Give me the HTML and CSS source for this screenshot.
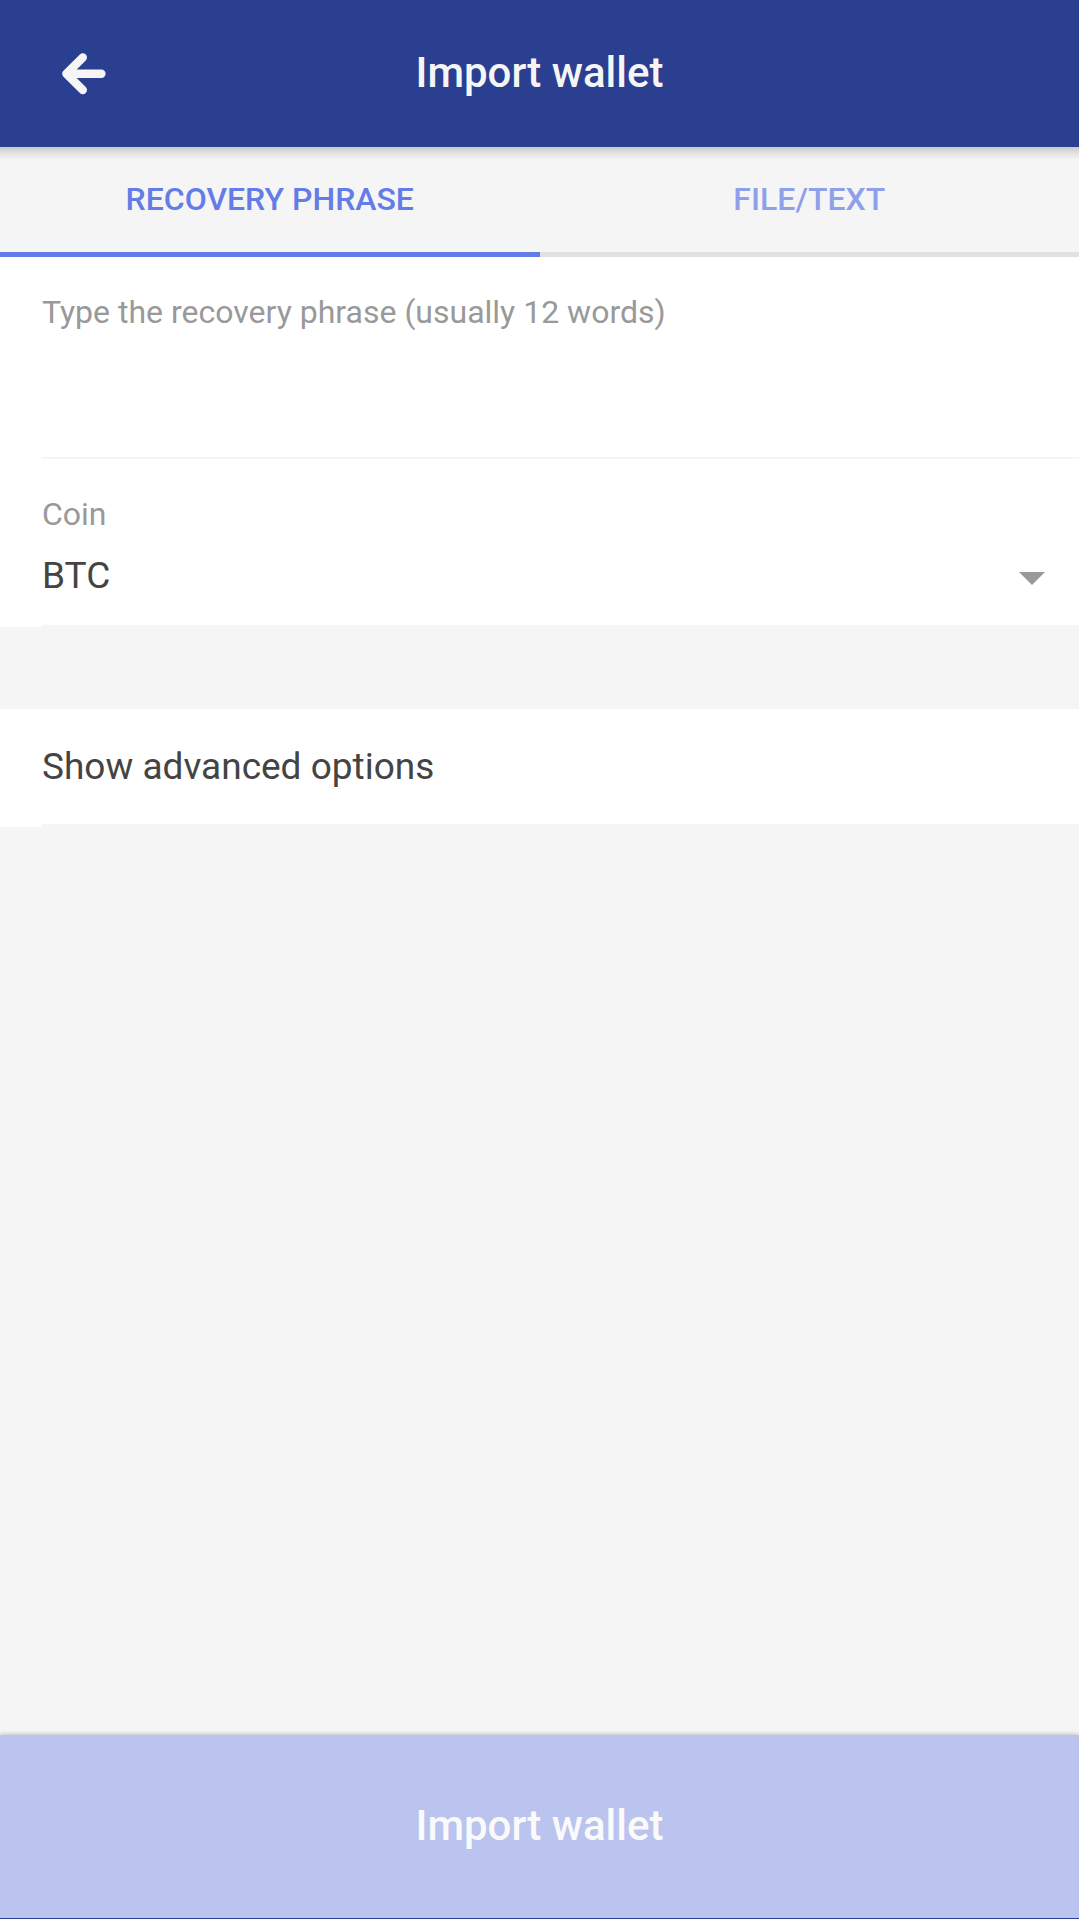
FILE: index.html
```html
<!DOCTYPE html>
<html lang="en">
<head>
<meta charset="utf-8">
<meta name="viewport" content="width=device-width, initial-scale=1">
<title>Import wallet</title>
<link rel="stylesheet" href="styles.css">
</head>
<body>
<header class="toolbar">
  <button class="back" type="button" aria-label="Back">
    <svg viewBox="0 0 46 42" width="46" height="42" fill="none" stroke="currentColor" stroke-width="8.4" stroke-linecap="round" stroke-linejoin="round"><path d="M21.8 4.4 L5.4 20.7 L21.8 37 M6 20.7 H40.4"/></svg>
  </button>
  <h1 class="title">Import wallet</h1>
</header>
<nav class="tabs" role="tablist">
  <button class="tab tab-active" type="button" role="tab" aria-selected="true">RECOVERY PHRASE</button>
  <button class="tab" type="button" role="tab" aria-selected="false">FILE/TEXT</button>
</nav>
<main class="content">
  <div class="row">
    <div class="field phrase">
      <label class="label" for="phrase">Type the recovery phrase (usually 12 words)</label>
      <textarea class="phrase-input" id="phrase"></textarea>
    </div>
  </div>
  <div class="row">
    <div class="field coin">
      <label class="label" for="coin">Coin</label>
      <div class="select-line">
        <select class="select" id="coin"><option>BTC</option></select>
        <svg class="caret" viewBox="0 0 26 20" width="26" height="20"><path d="M0 7H26L13 20Z" fill="currentColor"/></svg>
      </div>
    </div>
  </div>
  <div class="row advanced">
    <button class="field advanced-button" type="button">Show advanced options</button>
  </div>
</main>
<footer class="footer">
  <button class="submit" type="submit" disabled>Import wallet</button>
</footer>
</body>
</html>
```
FILE: styles.css
```css
* { box-sizing: border-box; }
body {
  margin: 0;
  min-height: 100vh;
  display: flex;
  flex-direction: column;
  background: #f5f5f5;
  color: #444;
  font-family: Roboto, sans-serif;
}
button, select, textarea {
  font: inherit;
  color: inherit;
  border: 0;
  border-radius: 0;
  background: none;
  margin: 0;
  padding: 0;
}
.toolbar {
  display: grid;
  grid-template-columns: 168px 1fr 168px;
  align-items: center;
  height: 147px;
  background: #2a3f90;
  color: #f5f5f5;
}
.back { height: 100%; display: grid; place-items: center; }
.title {
  margin: 0;
  padding-bottom: 2px;
  text-align: center;
  font-size: 42px;
  line-height: 50px;
  font-weight: 500;
}
.tabs {
  display: flex;
  height: 110px;
  background: linear-gradient(#c8c8c8, #dedede 5px, #f5f5f5 13px);
}
.tab {
  flex: 1;
  padding-bottom: 2px;
  border-bottom: 5px solid #e1e1e1;
  color: #8fa0ea;
  font-size: 32px;
  line-height: 38px;
  font-weight: 500;
}
.tab-active { border-color: #647ce8; color: #647ce8; }
.content { flex: 1; }
.row { padding-left: 42px; background: #fff; }
.field { border-bottom: 2px solid #f5f5f5; }
.label {
  display: block;
  color: #999;
  font-size: 32px;
  line-height: 38px;
}
.phrase { padding-top: 36px; }
.phrase-input {
  display: block;
  width: 100%;
  height: 126px;
  resize: none;
  outline: 0;
  font-size: 37px;
}
.coin { padding-top: 36px; padding-bottom: 28px; }
.select-line {
  display: grid;
  grid-template-columns: 1fr auto;
  align-items: center;
  padding-right: 34px;
  margin-top: 20px;
}
.select { appearance: none; height: 44px; font-size: 37px; }
.caret { color: #999; }
.advanced { margin-top: 82px; }
.advanced-button {
  display: block;
  width: 100%;
  height: 118px;
  border-bottom-width: 3px;
  text-align: left;
  font-size: 37px;
}
.footer {
  height: 184px;
  border-bottom: 1px solid #2a3f90;
  box-shadow: 0 0 5px rgba(0, 0, 0, 0.3);
}
.submit {
  width: 100%;
  height: 100%;
  padding-bottom: 2px;
  background: #bbc4ef;
  color: #fafafa;
  font-size: 42px;
  font-weight: 500;
}
```
